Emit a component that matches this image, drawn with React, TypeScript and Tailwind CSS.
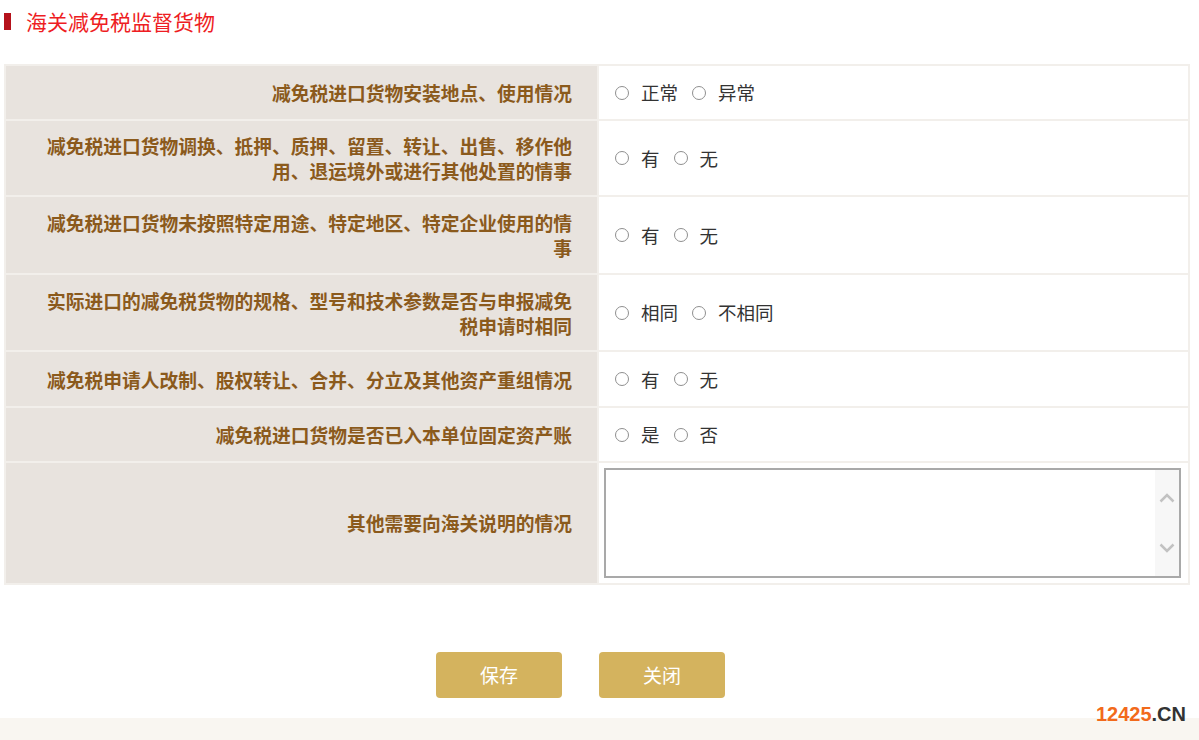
import React from "react";

const rows: { label: string[]; opts: string[]; h: number }[] = [
  { label: ["减免税进口货物安装地点、使用情况"], opts: ["正常", "异常"], h: 55 },
  { label: ["减免税进口货物调换、抵押、质押、留置、转让、出售、移作他", "用、退运境外或进行其他处置的情事"], opts: ["有", "无"], h: 76 },
  { label: ["减免税进口货物未按照特定用途、特定地区、特定企业使用的情", "事"], opts: ["有", "无"], h: 78 },
  { label: ["实际进口的减免税货物的规格、型号和技术参数是否与申报减免", "税申请时相同"], opts: ["相同", "不相同"], h: 77 },
  { label: ["减免税申请人改制、股权转让、合并、分立及其他资产重组情况"], opts: ["有", "无"], h: 56 },
  { label: ["减免税进口货物是否已入本单位固定资产账"], opts: ["是", "否"], h: 55 },
];

const font = { fontFamily: '"Noto Sans CJK SC", "Microsoft YaHei", sans-serif' };

function Radio({ text }: { text: string }) {
  return (
    <span className="flex items-center">
      <span className="w-[14px] h-[14px] rounded-full border border-[#8f8f8f] bg-white mr-[12px]" />
      <span className="text-[18.5px] text-[#333] mr-[14px] leading-none">{text}</span>
    </span>
  );
}

export default function App() {
  return (
    <div className="w-[1199px] h-[740px] bg-white relative overflow-hidden" style={font}>
      <div className="flex items-center h-[42px] pl-[4px]">
        <span className="w-[7px] h-[17px] bg-[#b5121b] mr-[15px]" />
        <span className="text-[21px] text-[#ee1d23] leading-none">海关减免税监督货物</span>
      </div>
      <div className="mt-[22px] ml-[4px] w-[1186px] border-2 border-[#f2efeb] border-t-0">
        {rows.map((r, i) => (
          <div key={i} className="flex border-t-2 border-[#f2efeb]" style={{ height: r.h }}>
            <div className="w-[591px] bg-[#e8e3de] flex flex-col justify-center items-end pr-[25px] text-[#8b5a1c] font-bold text-[18.75px] leading-[25px]">
              {r.label.map((l, j) => (
                <div key={j}>{l}</div>
              ))}
            </div>
            <div className="flex-1 flex items-center pl-[16px] border-l-2 border-[#f2efeb]">
              {r.opts.map((o) => (
                <Radio key={o} text={o} />
              ))}
            </div>
          </div>
        ))}
        <div className="flex border-t-2 border-[#f2efeb] h-[122px]">
          <div className="w-[591px] bg-[#e8e3de] flex items-center justify-end pr-[25px] text-[#8b5a1c] font-bold text-[18.75px]">
            其他需要向海关说明的情况
          </div>
          <div className="flex-1 border-l-2 border-[#f2efeb] pl-[5px] pr-[7px] py-[5px]">
            <div className="h-full border-2 border-[#a9a9a9] flex justify-end bg-white">
              <div className="w-[24px] h-full bg-[#f7f7f7] flex flex-col items-center justify-between py-[23px]">
                <svg width="16" height="10" viewBox="0 0 16 10"><path d="M1.5 8.5 L8 2 L14.5 8.5" fill="none" stroke="#c2c2c2" strokeWidth="2.5" /></svg>
                <svg width="16" height="10" viewBox="0 0 16 10"><path d="M1.5 1.5 L8 8 L14.5 1.5" fill="none" stroke="#c2c2c2" strokeWidth="2.5" /></svg>
              </div>
            </div>
          </div>
        </div>
      </div>
      <div className="flex justify-center gap-[37px] mt-[67px] pr-[38px]">
        <button className="w-[126px] h-[46px] rounded-[4px] bg-[#d4b35e] text-white text-[19px]">保存</button>
        <button className="w-[126px] h-[46px] rounded-[4px] bg-[#d4b35e] text-white text-[19px]">关闭</button>
      </div>
      <div className="absolute left-0 right-0 bottom-0 h-[22px] bg-[#f9f6f1]" />
      <div className="absolute right-[13px] top-[704px] text-[20px] font-bold leading-none" style={{ fontFamily: '"Liberation Sans", Arial, sans-serif' }}>
        <span className="text-[#f26a1b]">12425</span>
        <span className="text-[#333]">.CN</span>
      </div>
    </div>
  );
}
